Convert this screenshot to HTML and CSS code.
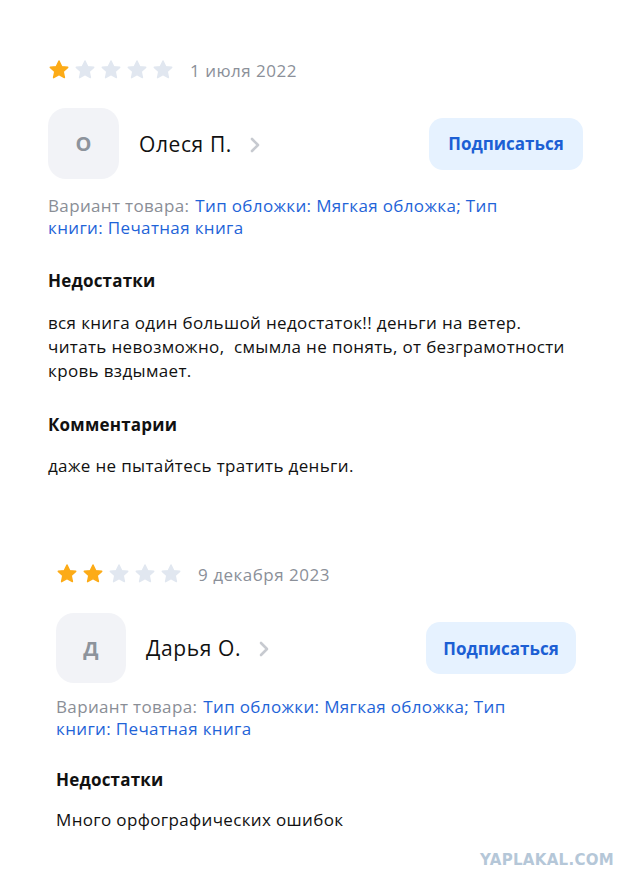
FILE: index.html
```html
<!DOCTYPE html>
<html lang="ru">
<head>
<meta charset="utf-8">
<link rel="stylesheet" href="styles.css">
</head>
<body>
<div class="page">
  <section class="review review-first">
    <div class="rating">
      <div class="stars">
        <svg class="star on" viewBox="0 0 24 24"><path d="M12 2.2l2.9 6.1 6.6.8-4.9 4.6 1.3 6.6L12 17l-5.9 3.3 1.3-6.6-4.9-4.6 6.6-.8z" stroke-linejoin="round" stroke-width="1.6"/></svg>
        <svg class="star" viewBox="0 0 24 24"><path d="M12 2.2l2.9 6.1 6.6.8-4.9 4.6 1.3 6.6L12 17l-5.9 3.3 1.3-6.6-4.9-4.6 6.6-.8z" stroke-linejoin="round" stroke-width="1.6"/></svg>
        <svg class="star" viewBox="0 0 24 24"><path d="M12 2.2l2.9 6.1 6.6.8-4.9 4.6 1.3 6.6L12 17l-5.9 3.3 1.3-6.6-4.9-4.6 6.6-.8z" stroke-linejoin="round" stroke-width="1.6"/></svg>
        <svg class="star" viewBox="0 0 24 24"><path d="M12 2.2l2.9 6.1 6.6.8-4.9 4.6 1.3 6.6L12 17l-5.9 3.3 1.3-6.6-4.9-4.6 6.6-.8z" stroke-linejoin="round" stroke-width="1.6"/></svg>
        <svg class="star" viewBox="0 0 24 24"><path d="M12 2.2l2.9 6.1 6.6.8-4.9 4.6 1.3 6.6L12 17l-5.9 3.3 1.3-6.6-4.9-4.6 6.6-.8z" stroke-linejoin="round" stroke-width="1.6"/></svg>
      </div>
      <span class="date">1 июля 2022</span>
    </div>
    <div class="author">
      <div class="avatar">О</div>
      <div class="name">Олеся П.</div>
      <svg class="chevron" viewBox="0 0 12 16"><path d="M3 2l6 6-6 6" fill="none" stroke-width="2.6" stroke-linecap="round" stroke-linejoin="round"/></svg>
      <button class="subscribe">Подписаться</button>
    </div>
    <div class="variant">
      <div class="variant-line"><span class="variant-label">Вариант товара:</span><span class="variant-value">Тип обложки: Мягкая обложка; Тип</span></div>
      <div class="variant-line"><span class="variant-value">книги: Печатная книга</span></div>
    </div>
    <h3 class="heading">Недостатки</h3>
    <p class="text">вся книга один большой недостаток!! деньги на ветер.<br>читать невозможно,&nbsp; смымла не понять, от безграмотности<br>кровь вздымает.</p>
    <h3 class="heading heading-gap">Комментарии</h3>
    <p class="text text-short">даже не пытайтесь тратить деньги.</p>
  </section>

  <section class="review review-second">
    <div class="rating">
      <div class="stars">
        <svg class="star on" viewBox="0 0 24 24"><path d="M12 2.2l2.9 6.1 6.6.8-4.9 4.6 1.3 6.6L12 17l-5.9 3.3 1.3-6.6-4.9-4.6 6.6-.8z" stroke-linejoin="round" stroke-width="1.6"/></svg>
        <svg class="star on" viewBox="0 0 24 24"><path d="M12 2.2l2.9 6.1 6.6.8-4.9 4.6 1.3 6.6L12 17l-5.9 3.3 1.3-6.6-4.9-4.6 6.6-.8z" stroke-linejoin="round" stroke-width="1.6"/></svg>
        <svg class="star" viewBox="0 0 24 24"><path d="M12 2.2l2.9 6.1 6.6.8-4.9 4.6 1.3 6.6L12 17l-5.9 3.3 1.3-6.6-4.9-4.6 6.6-.8z" stroke-linejoin="round" stroke-width="1.6"/></svg>
        <svg class="star" viewBox="0 0 24 24"><path d="M12 2.2l2.9 6.1 6.6.8-4.9 4.6 1.3 6.6L12 17l-5.9 3.3 1.3-6.6-4.9-4.6 6.6-.8z" stroke-linejoin="round" stroke-width="1.6"/></svg>
        <svg class="star" viewBox="0 0 24 24"><path d="M12 2.2l2.9 6.1 6.6.8-4.9 4.6 1.3 6.6L12 17l-5.9 3.3 1.3-6.6-4.9-4.6 6.6-.8z" stroke-linejoin="round" stroke-width="1.6"/></svg>
      </div>
      <span class="date">9 декабря 2023</span>
    </div>
    <div class="author">
      <div class="avatar">Д</div>
      <div class="name">Дарья О.</div>
      <svg class="chevron" viewBox="0 0 12 16"><path d="M3 2l6 6-6 6" fill="none" stroke-width="2.6" stroke-linecap="round" stroke-linejoin="round"/></svg>
      <button class="subscribe">Подписаться</button>
    </div>
    <div class="variant">
      <div class="variant-line"><span class="variant-label">Вариант товара:</span><span class="variant-value">Тип обложки: Мягкая обложка; Тип</span></div>
      <div class="variant-line"><span class="variant-value">книги: Печатная книга</span></div>
    </div>
    <h3 class="heading">Недостатки</h3>
    <p class="text">Много орфографических ошибок</p>
  </section>

  <div class="watermark">YAPLAKAL.COM</div>
</div>
</body>
</html>
```

FILE: styles.css
```css
* { box-sizing: border-box; }
html, body { margin: 0; padding: 0; background: #ffffff; }
body {
  font-family: "Open Sans", "Noto Sans", sans-serif;
  color: #1a1a1a;
  width: 640px;
  height: 891px;
  overflow: hidden;
}
.page {
  display: flex;
  flex-direction: column;
  height: 891px;
}
.review {
  display: flex;
  flex-direction: column;
}
.review-first {
  padding: 59px 57px 0 48px;
}
.review-second {
  padding: 85px 64px 0 56px;
}
.rating {
  display: flex;
  align-items: center;
  height: 22px;
}
.stars {
  display: flex;
  gap: 4px;
}
.star {
  width: 22px;
  height: 22px;
  fill: #e1e7f0;
  stroke: #e1e7f0;
}
.star.on {
  fill: #fcab17;
  stroke: #fcab17;
}
.date {
  margin-left: 16px;
  font-size: 17px;
  letter-spacing: 0.5px;
  color: #8b9099;
}
.author {
  display: flex;
  align-items: center;
  margin-top: 27px;
}
.review-second .author { margin-top: 28px; }
.avatar {
  width: 71px;
  height: 71px;
  border-radius: 18px;
  background: #f2f3f7;
  display: flex;
  align-items: center;
  justify-content: center;
  font-size: 20px;
  font-weight: 700;
  color: #8d939c;
}
.review-second .avatar { width: 70px; height: 70px; }
.name {
  margin-left: 20px;
  font-size: 21px;
  letter-spacing: 0.6px;
  color: #111111;
}
.chevron {
  width: 12px;
  height: 16px;
  margin-left: 17px;
  stroke: #c7cad0;
  margin-top: 2px;
}
.subscribe {
  margin-left: auto;
  width: 154px;
  height: 52px;
  border: none;
  border-radius: 14px;
  background: #e6f2ff;
  color: #1c5fd4;
  font-family: inherit;
  font-size: 17px;
  font-weight: 700;
  padding: 0;
}
.review-second .subscribe { width: 150px; }
.variant {
  margin: 16px 0 0;
  font-size: 17px;
  line-height: 22px;
  letter-spacing: 0.35px;
}
.review-second .variant { margin-top: 13px; }
.variant-label { color: #8a8e96; margin-right: 6px; }
.variant-value { color: #1f64d8; }
.heading {
  margin: 30px 0 0;
  font-size: 17px;
  font-weight: 700;
  line-height: 24px;
  letter-spacing: 0.2px;
  color: #111111;
}
.text {
  margin: 18px 0 0;
  font-size: 17px;
  line-height: 24px;
  letter-spacing: 0.35px;
  color: #111111;
}
.heading-gap { margin-top: 30px; }
.text-short { margin-top: 17px; }
.review-second .heading { margin-top: 28px; }
.review-second .text { margin-top: 16px; }
.watermark {
  margin-top: auto;
  margin-bottom: 22px;
  align-self: flex-end;
  margin-right: 26px;
  font-family: "DejaVu Sans", sans-serif;
  font-weight: 700;
  font-size: 15px;
  letter-spacing: 0.3px;
  color: #b5c7d8;
}
```
